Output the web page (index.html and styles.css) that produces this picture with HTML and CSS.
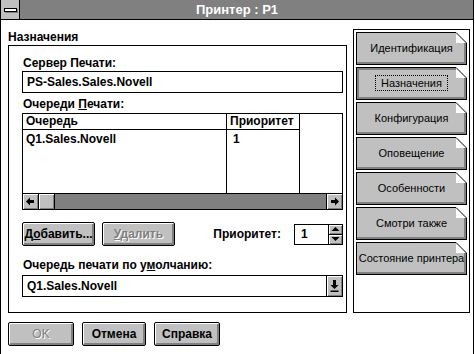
FILE: index.html
```html
<!DOCTYPE html>
<html>

<head>
    <meta charset="UTF-8">
    <link rel="stylesheet" href="styles.css">
</head>

<body>
    <div class="window">
        <div class="titlebar">
            <div class="sysmenu"><span class="sysbar"></span></div>
            <div class="title">Принтер : P1</div>
            <div></div>
        </div>

        <div class="client">
            <div class="main">
                <div class="page">
                    <div class="page-title">Назначения</div>
                    <div class="group">
                        <div class="label first">Сервер Печати:</div>
                        <div class="field">PS-Sales.Sales.Novell</div>

                        <div class="label queues">Очереди <u>П</u>ечати:</div>
                        <div class="list">
                            <div class="cols">
                                <div class="col col-name">
                                    <div class="col-head">Очередь</div>
                                    <div class="cell">Q1.Sales.Novell</div>
                                </div>
                                <div class="col col-prio">
                                    <div class="col-head">Приоритет</div>
                                    <div class="cell">1</div>
                                </div>
                                <div class="col col-rest"></div>
                            </div>
                            <div class="hscroll">
                                <div class="sbtn">
                                    <svg width="13" height="13" viewBox="0 0 13 13"><path d="M2 6.5 L6 2.5 L6 5 L10 5 L10 8 L6 8 L6 10.5 Z" fill="#000"/></svg>
                                </div>
                                <div class="thumb"></div>
                                <div class="track"></div>
                                <div class="sbtn sbtn-right">
                                    <svg width="13" height="13" viewBox="0 0 13 13"><path d="M11 6.5 L7 2.5 L7 5 L3 5 L3 8 L7 8 L7 10.5 Z" fill="#000"/></svg>
                                </div>
                            </div>
                        </div>

                        <div class="actions">
                            <button class="btn btn-add">Д<u>о</u>бавить...</button>
                            <button class="btn btn-del disabled"><u>У</u>далить</button>
                            <span class="prio-label">Приоритет:</span>
                            <div class="spin">
                                <div class="spin-val">1</div>
                                <div class="spin-btns">
                                    <div class="spin-btn">
                                        <svg width="11" height="8" viewBox="0 0 11 8"><path d="M1.5 6 L5.5 2 L9.5 6 Z" fill="#000"/></svg>
                                    </div>
                                    <div class="spin-btn">
                                        <svg width="11" height="8" viewBox="0 0 11 8"><path d="M1.5 2 L5.5 6 L9.5 2 Z" fill="#000"/></svg>
                                    </div>
                                </div>
                            </div>
                        </div>

                        <div class="label default-q">Очередь печати по у<u>м</u>олчанию:</div>
                        <div class="combo">
                            <div class="combo-val">Q1.Sales.Novell</div>
                            <div class="combo-btn">
                                <svg width="13" height="18" viewBox="0 0 13 18"><path d="M5 3 L8 3 L8 8 L10.5 8 L6.5 12 L2.5 8 L5 8 Z" fill="#000"/><rect x="2.5" y="13.5" width="8" height="1.5" fill="#000"/></svg>
                            </div>
                        </div>
                    </div>
                </div>

                <div class="tabs">
                    <div class="tab">Идентификация<svg class="ear" width="11" height="11" viewBox="0 0 11 11"><rect width="11" height="11" fill="#fff"/><path d="M0 0.5 L10.5 11" stroke="#000" stroke-width="1"/></svg></div>
                    <div class="tab active"><span class="focus">Назначения</span><svg class="ear" width="11" height="11" viewBox="0 0 11 11"><rect width="11" height="11" fill="#fff"/><path d="M0 0.5 L10.5 11" stroke="#000" stroke-width="1"/></svg></div>
                    <div class="tab">Конфигурация<svg class="ear" width="11" height="11" viewBox="0 0 11 11"><rect width="11" height="11" fill="#fff"/><path d="M0 0.5 L10.5 11" stroke="#000" stroke-width="1"/></svg></div>
                    <div class="tab">Оповещение<svg class="ear" width="11" height="11" viewBox="0 0 11 11"><rect width="11" height="11" fill="#fff"/><path d="M0 0.5 L10.5 11" stroke="#000" stroke-width="1"/></svg></div>
                    <div class="tab">Особенности<svg class="ear" width="11" height="11" viewBox="0 0 11 11"><rect width="11" height="11" fill="#fff"/><path d="M0 0.5 L10.5 11" stroke="#000" stroke-width="1"/></svg></div>
                    <div class="tab">Смотри также<svg class="ear" width="11" height="11" viewBox="0 0 11 11"><rect width="11" height="11" fill="#fff"/><path d="M0 0.5 L10.5 11" stroke="#000" stroke-width="1"/></svg></div>
                    <div class="tab">Состояние принтера<svg class="ear" width="11" height="11" viewBox="0 0 11 11"><rect width="11" height="11" fill="#fff"/><path d="M0 0.5 L10.5 11" stroke="#000" stroke-width="1"/></svg></div>
                </div>
            </div>

            <div class="footer">
                <button class="btn btn-ok disabled">OK</button>
                <button class="btn btn-cancel">Отмена</button>
                <button class="btn btn-help">Справка</button>
            </div>
        </div>
    </div>
</body>

</html>
```

FILE: styles.css
```css
* {
    box-sizing: border-box;
}

body {
    margin: 0;
    background-color: #fff;
    font-family: "Liberation Sans", Arial, sans-serif;
    font-size: 12px;
    color: #000;
}

.window {
    width: 474px;
    height: 354px;
    border-left: 1px solid #000;
    border-right: 1px solid #000;
    display: flex;
    flex-direction: column;
}

/* title bar */
.titlebar {
    height: 20px;
    background-color: #808080;
    border-bottom: 1px solid #000;
    display: grid;
    grid-template-columns: 19px 1fr 19px;
}

.sysmenu {
    background-color: #c0c0c0;
    border-right: 1px solid #000;
    display: flex;
    align-items: center;
    justify-content: center;
}

.sysbar {
    width: 13px;
    height: 4px;
    background-color: #fff;
    border: 1px solid #000;
    box-shadow: 1px 1px 0 #808080;
}

.title {
    color: #fff;
    font-weight: bold;
    font-size: 13px;
    line-height: 19px;
    text-align: center;
}

/* client area */
.client {
    flex: 1;
    padding: 0 3px 0 7px;
    display: flex;
    flex-direction: column;
}

.main {
    display: flex;
    gap: 6px;
}

.page {
    width: 339px;
    padding-top: 10px;
}

.page-title {
    font-weight: bold;
    line-height: 15px;
}

.group {
    height: 268px;
    border: 1px solid #000;
    padding: 0 3px 0 13px;
}

.label {
    font-weight: bold;
    line-height: 14px;
    padding-left: 1px;
}

.label.first {
    margin-top: 10px;
}

.label.queues {
    margin-top: 4px;
}

.label.default-q {
    margin-top: 12px;
}

.field {
    margin-top: 1px;
    height: 22px;
    border: 1px solid #000;
    font-weight: bold;
    line-height: 20px;
    padding-left: 4px;
}

/* queue list */
.list {
    margin-top: 2px;
    height: 97px;
    border: 1px solid #000;
    display: flex;
    flex-direction: column;
}

.cols {
    flex: 1;
    display: flex;
}

.col-name {
    width: 204px;
    border-right: 1px solid #000;
}

.col-prio {
    width: 73px;
    border-right: 1px solid #000;
}

.col-rest {
    flex: 1;
}

.col-head {
    height: 16px;
    border-bottom: 1px solid #000;
    font-weight: bold;
    line-height: 15px;
    padding-left: 3px;
}

.cell {
    font-weight: bold;
    line-height: 16px;
    padding-left: 3px;
    margin-top: 1px;
}

.col-prio .cell {
    padding-left: 6px;
}

.hscroll {
    height: 16px;
    border-top: 1px solid #000;
    display: flex;
    background-color: #808080;
}

.sbtn {
    width: 16px;
    background-color: #c0c0c0;
    border-right: 1px solid #000;
    box-shadow: inset 1px 1px #fff, inset -1px -1px #808080;
    display: flex;
    align-items: center;
    justify-content: center;
}

.sbtn-right {
    border-right: none;
    border-left: 1px solid #000;
}

.thumb {
    width: 16px;
    background-color: #c0c0c0;
    border-right: 1px solid #000;
    box-shadow: inset 1px 1px #fff, inset -1px -1px #808080;
}

.track {
    flex: 1;
}

/* buttons */
.btn {
    font-family: inherit;
    font-size: 12px;
    font-weight: bold;
    color: #000;
    height: 24px;
    padding: 0;
    border: 1px solid #000;
    border-radius: 2px;
    background-color: #c0c0c0;
    box-shadow: inset 1px 1px #fff, inset -2px -2px #808080;
}

.btn.disabled {
    color: #808080;
    text-shadow: 1px 1px 0 #fff;
}

.actions {
    margin-top: 12px;
    height: 24px;
    display: flex;
    align-items: center;
}

.btn-add {
    width: 73px;
}

.btn-del {
    width: 73px;
    margin-left: 7px;
}

.prio-label {
    margin-left: auto;
    margin-right: 13px;
    font-weight: bold;
}

.spin {
    display: flex;
    height: 21px;
}

.spin-val {
    width: 35px;
    border: 1px solid #000;
    font-weight: bold;
    line-height: 19px;
    padding-left: 6px;
}

.spin-btns {
    width: 14px;
    display: flex;
    flex-direction: column;
    border: 1px solid #000;
    border-left: none;
}

.spin-btn {
    flex: 1;
    background-color: #c0c0c0;
    box-shadow: inset 1px 1px #fff, inset -1px -1px #808080;
    display: flex;
    align-items: center;
    justify-content: center;
}

.spin-btn + .spin-btn {
    border-top: 1px solid #000;
}

.combo {
    margin-top: 3px;
    height: 22px;
    border: 1px solid #000;
    display: flex;
}

.combo-val {
    flex: 1;
    font-weight: bold;
    line-height: 20px;
    padding-left: 4px;
}

.combo-btn {
    width: 16px;
    border-left: 1px solid #000;
    background-color: #c0c0c0;
    box-shadow: inset 1px 1px #fff, inset -1px -1px #808080;
    display: flex;
    align-items: center;
    justify-content: center;
}

/* page tabs */
.tabs {
    width: 117px;
    height: 284px;
    margin-top: 9px;
    border: 1px solid #000;
    padding: 2px 2px 0 2px;
    display: flex;
    flex-direction: column;
    gap: 2px;
}

.tab {
    position: relative;
    height: 33px;
    border: 1px solid #000;
    background-color: #c0c0c0;
    box-shadow: inset -2px -2px #808080;
    font-size: 11px;
    line-height: 31px;
    text-align: center;
    white-space: nowrap;
}

.tab.active {
    box-shadow: inset 2px 2px #808080, inset -2px -2px #808080;
}

.focus {
    border: 1px dotted #000;
    padding: 1px 5px;
}

.ear {
    position: absolute;
    top: -1px;
    right: -1px;
}

/* bottom buttons */
.footer {
    padding-top: 9px;
    display: flex;
    gap: 8px;
}

.btn-ok {
    width: 66px;
    font-weight: normal;
}

.btn-cancel {
    width: 64px;
}

.btn-help {
    width: 66px;
}
```
